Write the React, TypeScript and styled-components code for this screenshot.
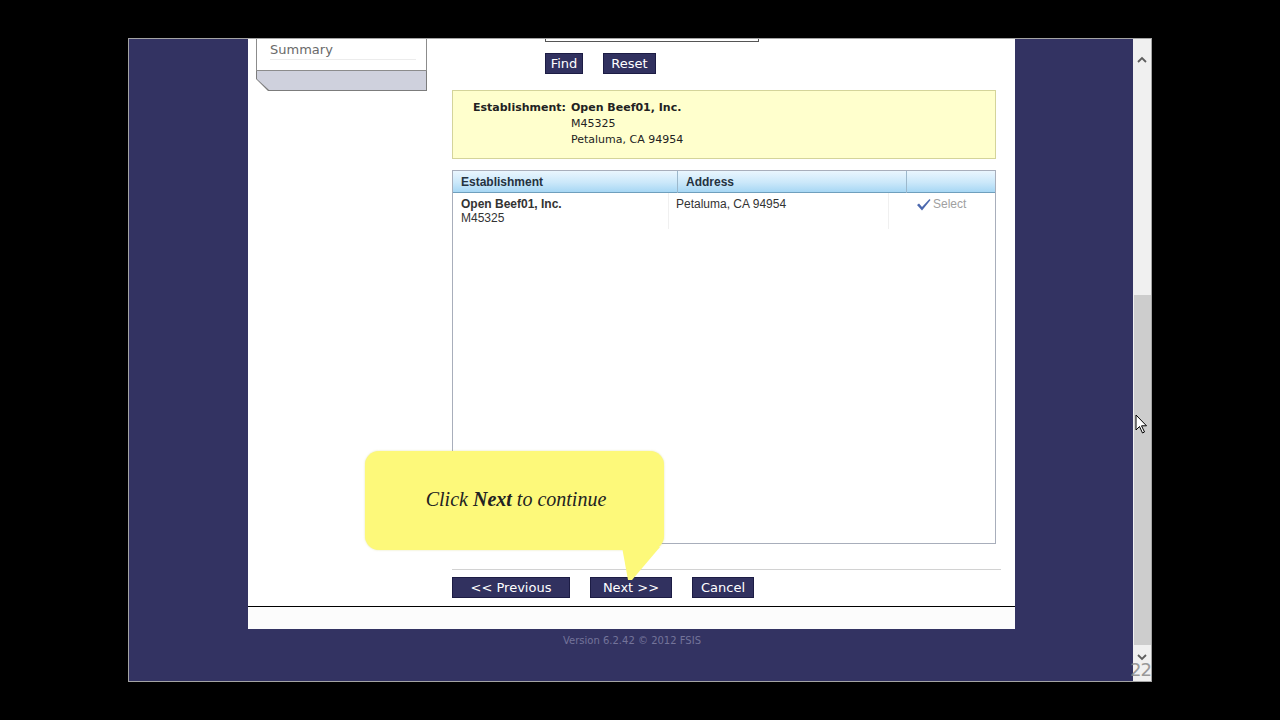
import styled, { createGlobalStyle } from "styled-components";

const GlobalStyle = createGlobalStyle`
    html, body {
        margin: 0;
        padding: 0;
        background: #000;
    }
    body {
        font-family: "DejaVu Sans", Verdana, sans-serif;
    }
`;

const Screen = styled.div`
    width: 1280px;
    height: 720px;
    background: #000;
    padding: 38px 0 0 128px;
    box-sizing: border-box;
    overflow: hidden;
`;
const Window = styled.div`
    position: relative;
    width: 1024px;
    height: 644px;
    box-sizing: border-box;
    border: 1px solid #a4a4a4;
    display: flex;
    overflow: hidden;
`;
const Viewport = styled.div`
    flex: 1;
    background: #333362;
    display: flex;
    flex-direction: column;
    align-items: center;
`;
const Panel = styled.div`
    width: 767px;
    margin-left: 1px;
    background: #fff;
    display: flex;
    flex-direction: column;
`;
const PanelBody = styled.div`
    display: flex;
    height: 567px;
    padding: 0 14px 0 8px;
`;

/* left navigation */
const Sidebar = styled.div`
    width: 171px;
    margin-right: 25px;
    display: flex;
    flex-direction: column;
`;
const SideNav = styled.div`
    height: 32px;
    box-sizing: border-box;
    border: 1px solid #8c8c8c;
    border-top: none;
    padding: 2px 10px 0 13px;
`;
const SideItem = styled.div`
    font-size: 13px;
    line-height: 17px;
    color: #6a6a6a;
    border-bottom: 1px solid #ececec;
    padding-bottom: 1px;
`;
const SideTab = styled.div`
    height: 20px;
    background: #7c7c7c;
    clip-path: polygon(0 0, 100% 0, 100% 100%, 12px 100%, 0 8px);
    position: relative;
    &::after {
        content: "";
        position: absolute;
        inset: 0 1px 1px 1px;
        background: #cfd1dd;
        clip-path: polygon(0 0, 100% 0, 100% 100%, 12px 100%, 0 8px);
    }
`;

/* main column */
const Main = styled.div`
    flex: 1;
    display: flex;
    flex-direction: column;
`;
const SearchStub = styled.div`
    margin-left: 93px;
    width: 214px;
    height: 3px;
    box-sizing: border-box;
    border: 1px solid #555;
    border-top: none;
`;
const ButtonRow = styled.div<{ $indent?: number; $top: number }>`
    display: flex;
    gap: 20px;
    margin-top: ${(p) => p.$top}px;
    padding-left: ${(p) => p.$indent ?? 0}px;
`;
const NavButton = styled.button<{ $w: number }>`
    width: ${(p) => p.$w}px;
    height: 21px;
    padding: 0;
    border: 1px solid #1c1c44;
    background: #31315f;
    color: #fff;
    font-family: "DejaVu Sans", Verdana, sans-serif;
    font-size: 13px;
    line-height: 19px;
    text-align: center;
    cursor: pointer;
`;

const InfoBox = styled.div`
    margin-top: 16px;
    width: 544px;
    height: 69px;
    box-sizing: border-box;
    background: #ffffcd;
    border: 1px solid #d4d49a;
    padding: 9px 20px;
    display: grid;
    grid-template-columns: 98px 1fr;
    font-size: 11px;
    line-height: 16px;
    color: #222;
`;
const InfoLabel = styled.div`
    font-weight: bold;
`;
const InfoValue = styled.div`
    strong {
        font-weight: bold;
    }
`;

const Grid = styled.div`
    margin-top: 11px;
    width: 544px;
    height: 374px;
    box-sizing: border-box;
    border: 1px solid #a8aebb;
    font-family: "Liberation Sans", Arial, sans-serif;
    font-size: 12px;
    color: #333;
`;
const GridHeader = styled.div`
    display: grid;
    grid-template-columns: 225px 229px 1fr;
    height: 21px;
    background: linear-gradient(#eaf6fe, #cbe8fa 55%, #a7d7f4);
    border-bottom: 1px solid #6f9fbd;
`;
const HeaderCell = styled.div`
    font-weight: bold;
    color: #25323f;
    line-height: 22px;
    padding-left: 8px;
    border-right: 1px solid #9cb8cc;
    &:last-child {
        border-right: none;
    }
`;
const GridRow = styled.div`
    display: grid;
    grid-template-columns: 216px 220px 1fr;
    height: 36px;
`;
const Cell = styled.div<{ $pad: number }>`
    padding: 4px 0 0 ${(p) => p.$pad}px;
    line-height: 14px;
    border-right: 1px solid #f0f0f0;
    &:last-child {
        border-right: none;
    }
    b {
        font-weight: bold;
    }
`;
const SelectLink = styled.span`
    display: inline-flex;
    align-items: center;
    gap: 2px;
    color: #a0a0a0;
    svg {
        display: block;
    }
`;

const Divider = styled.div`
    margin-top: 25px;
    height: 1px;
    background: #d2d2d2;
`;

const Rule = styled.div`
    height: 1px;
    background: #000;
`;
const PanelFoot = styled.div`
    height: 22px;
    background: #fcfcfc;
`;
const Version = styled.div`
    margin-top: 6px;
    margin-left: 2px;
    font-size: 10px;
    line-height: 12px;
    color: #74749a;
`;

/* scrollbar */
const Scrollbar = styled.div`
    width: 18px;
    background: #f0f0f0;
    display: flex;
    flex-direction: column;
    align-items: center;
`;
const ScrollArrow = styled.div<{ $top: number }>`
    height: 21px;
    display: flex;
    align-items: center;
    justify-content: center;
    margin-top: ${(p) => p.$top}px;
`;
const ScrollThumb = styled.div`
    width: 17px;
    height: 350px;
    background: #cdcdcd;
    margin-top: 225px;
`;

/* overlays */
const Callout = styled.div`
    position: absolute;
    left: 236px;
    top: 412px;
    width: 299px;
    height: 99px;
    border-radius: 14px;
    background: #fdf97a;
    box-shadow: 0 0 2px rgba(200, 200, 80, 0.5);
    display: flex;
    align-items: center;
    justify-content: center;
`;
const CalloutText = styled.div`
    font-family: "Liberation Serif", "Times New Roman", serif;
    font-style: italic;
    font-size: 20px;
    color: #222;
    margin-top: -3px;
    margin-left: 3px;
    b {
        font-weight: bold;
    }
`;
const CalloutTail = styled.svg`
    position: absolute;
    left: 255px;
    top: 96px;
`;
const Cursor = styled.svg`
    position: absolute;
    left: 1006px;
    top: 375px;
`;
const FrameCounter = styled.div`
    position: absolute;
    left: 1001px;
    top: 620px;
    font-family: "DejaVu Sans", sans-serif;
    font-size: 18px;
    letter-spacing: -1px;
    color: #8a8a8a;
    opacity: 0.85;
`;

const Chevron = ({ up }: { up?: boolean }) => (
    <svg width="10" height="7" viewBox="0 0 10 7">
        <path
            d={up ? "M1 6 L5 2 L9 6" : "M1 1 L5 5 L9 1"}
            fill="none"
            stroke="#5e5e5e"
            strokeWidth="1.8"
        />
    </svg>
);

const App = () => {
    return (
        <>
            <GlobalStyle />
            <Screen>
                <Window>
                    <Viewport>
                        <Panel>
                            <PanelBody>
                                <Sidebar>
                                    <SideNav>
                                        <SideItem>Summary</SideItem>
                                    </SideNav>
                                    <SideTab />
                                </Sidebar>
                                <Main>
                                    <SearchStub />
                                    <ButtonRow $indent={93} $top={11}>
                                        <NavButton $w={38}>Find</NavButton>
                                        <NavButton $w={53}>Reset</NavButton>
                                    </ButtonRow>
                                    <InfoBox>
                                        <InfoLabel>Establishment:</InfoLabel>
                                        <InfoValue>
                                            <strong>Open Beef01, Inc.</strong>
                                            <br />
                                            M45325
                                            <br />
                                            Petaluma, CA 94954
                                        </InfoValue>
                                    </InfoBox>
                                    <Grid>
                                        <GridHeader>
                                            <HeaderCell>Establishment</HeaderCell>
                                            <HeaderCell>Address</HeaderCell>
                                            <HeaderCell />
                                        </GridHeader>
                                        <GridRow>
                                            <Cell $pad={8}>
                                                <b>Open Beef01, Inc.</b>
                                                <br />
                                                M45325
                                            </Cell>
                                            <Cell $pad={7}>Petaluma, CA 94954</Cell>
                                            <Cell $pad={27}>
                                                <SelectLink>
                                                    <svg width="15" height="13" viewBox="0 0 15 13">
                                                        <path
                                                            d="M1 7 L3 5.5 L6 9 L13.5 1 L14.5 2 L6 12.5 Z"
                                                            fill="#4b68ae"
                                                        />
                                                    </svg>
                                                    Select
                                                </SelectLink>
                                            </Cell>
                                        </GridRow>
                                    </Grid>
                                    <Divider />
                                    <ButtonRow $top={7}>
                                        <NavButton $w={118}>&lt;&lt; Previous</NavButton>
                                        <NavButton $w={82}>Next &gt;&gt;</NavButton>
                                        <NavButton $w={62}>Cancel</NavButton>
                                    </ButtonRow>
                                </Main>
                            </PanelBody>
                            <Rule />
                            <PanelFoot />
                        </Panel>
                        <Version>Version 6.2.42 © 2012 FSIS</Version>
                    </Viewport>
                    <Scrollbar>
                        <ScrollArrow $top={10}>
                            <Chevron up />
                        </ScrollArrow>
                        <ScrollThumb />
                        <ScrollArrow $top={2}>
                            <Chevron />
                        </ScrollArrow>
                    </Scrollbar>

                    <Callout>
                        <CalloutText>
                            Click <b>Next</b> to continue
                        </CalloutText>
                        <CalloutTail width="42" height="34" viewBox="0 0 42 34">
                            <path d="M2 0 L40 0 L12 33 L8 33 Z" fill="#fdf97a" />
                        </CalloutTail>
                    </Callout>
                    <Cursor width="14" height="21" viewBox="0 0 14 21">
                        <path
                            d="M1 1 L1 16 L4.5 12.5 L7.5 19 L9.5 18 L6.5 11.8 L11.5 11.8 Z"
                            fill="#fff"
                            stroke="#000"
                            strokeWidth="1"
                            strokeLinejoin="round"
                        />
                    </Cursor>
                    <FrameCounter>22</FrameCounter>
                </Window>
            </Screen>
        </>
    );
};

export default App;
